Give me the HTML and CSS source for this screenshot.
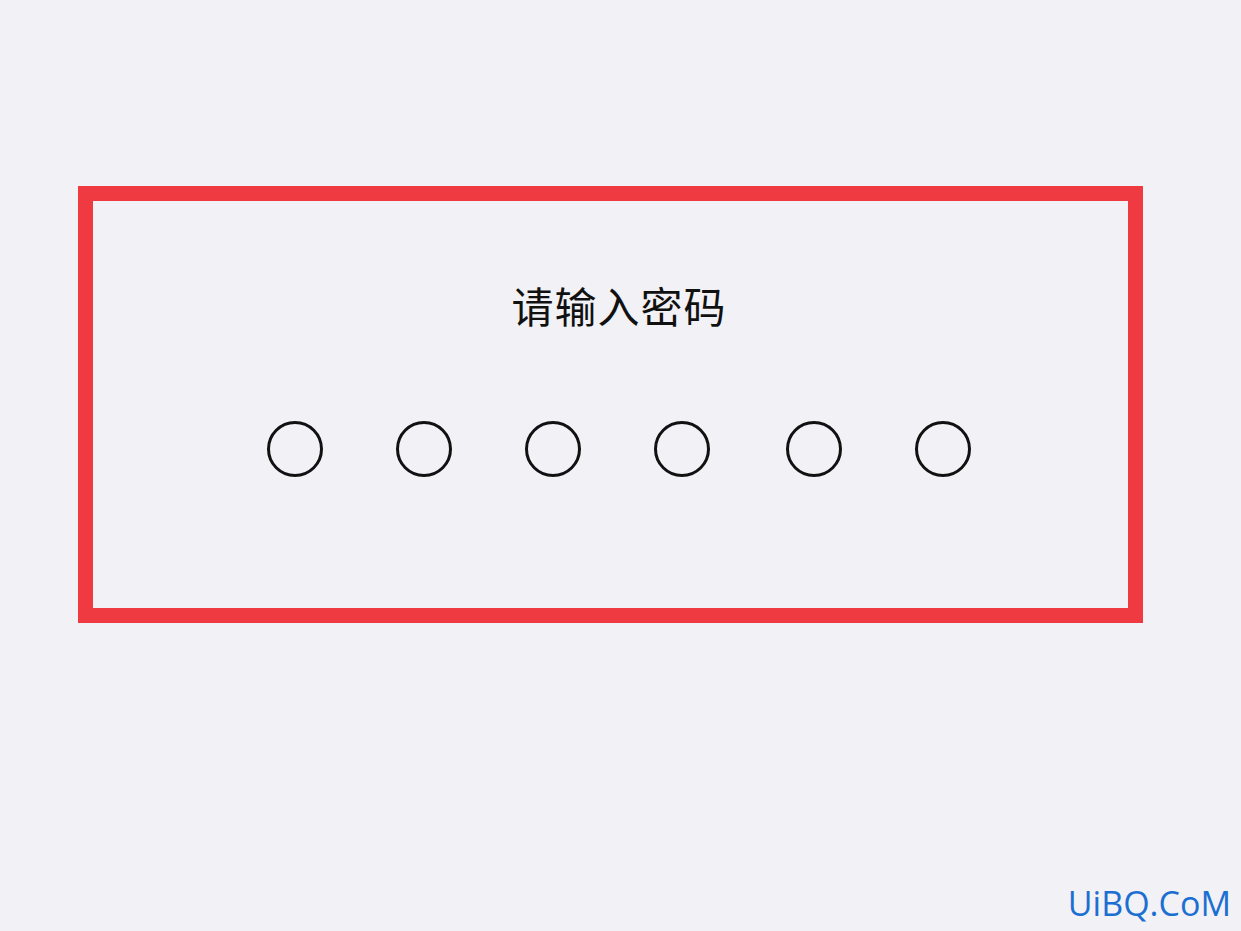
FILE: index.html
```html
<!DOCTYPE html>
<html lang="zh-CN">
<head>
<meta charset="utf-8">
<title>请输入密码</title>
<link rel="stylesheet" href="styles.css">
</head>
<body>
<div class="page">
  <div class="frame">
    <div class="title">请输入密码</div>
    <div class="dots">
      <span class="dot"></span>
      <span class="dot"></span>
      <span class="dot"></span>
      <span class="dot wide"></span>
      <span class="dot"></span>
      <span class="dot"></span>
    </div>
  </div>
</div>
<div class="watermark">UiBQ.CoM</div>
</body>
</html>
```

FILE: styles.css
```css
html, body {
  margin: 0;
  padding: 0;
  background: #f2f1f6;
  width: 1241px;
  height: 931px;
  overflow: hidden;
}
.page {
  padding: 186px 0 0 78px;
}
.frame {
  box-sizing: border-box;
  width: 1065px;
  height: 437px;
  border: 15px solid #ee3a40;
  padding: 76px 0 0 17px;
  display: flex;
  flex-direction: column;
  align-items: center;
}
.title {
  font-family: "Noto Sans CJK SC", "Noto Sans", sans-serif;
  font-size: 42px;
  line-height: 56px;
  color: #111;
  letter-spacing: 1px;
}
.dots {
  margin-top: 88px;
  display: flex;
  gap: 73px;
}
.dot {
  box-sizing: border-box;
  width: 56px;
  height: 56px;
  border: 3.4px solid #111;
  border-radius: 50%;
}
.dot.wide {
  margin-right: 3px;
}
.watermark {
  position: absolute;
  right: 10px;
  bottom: 5px;
  font-family: "Open Sans", "Noto Sans", sans-serif;
  font-size: 34px;
  color: #1b6fd1;
}
```
